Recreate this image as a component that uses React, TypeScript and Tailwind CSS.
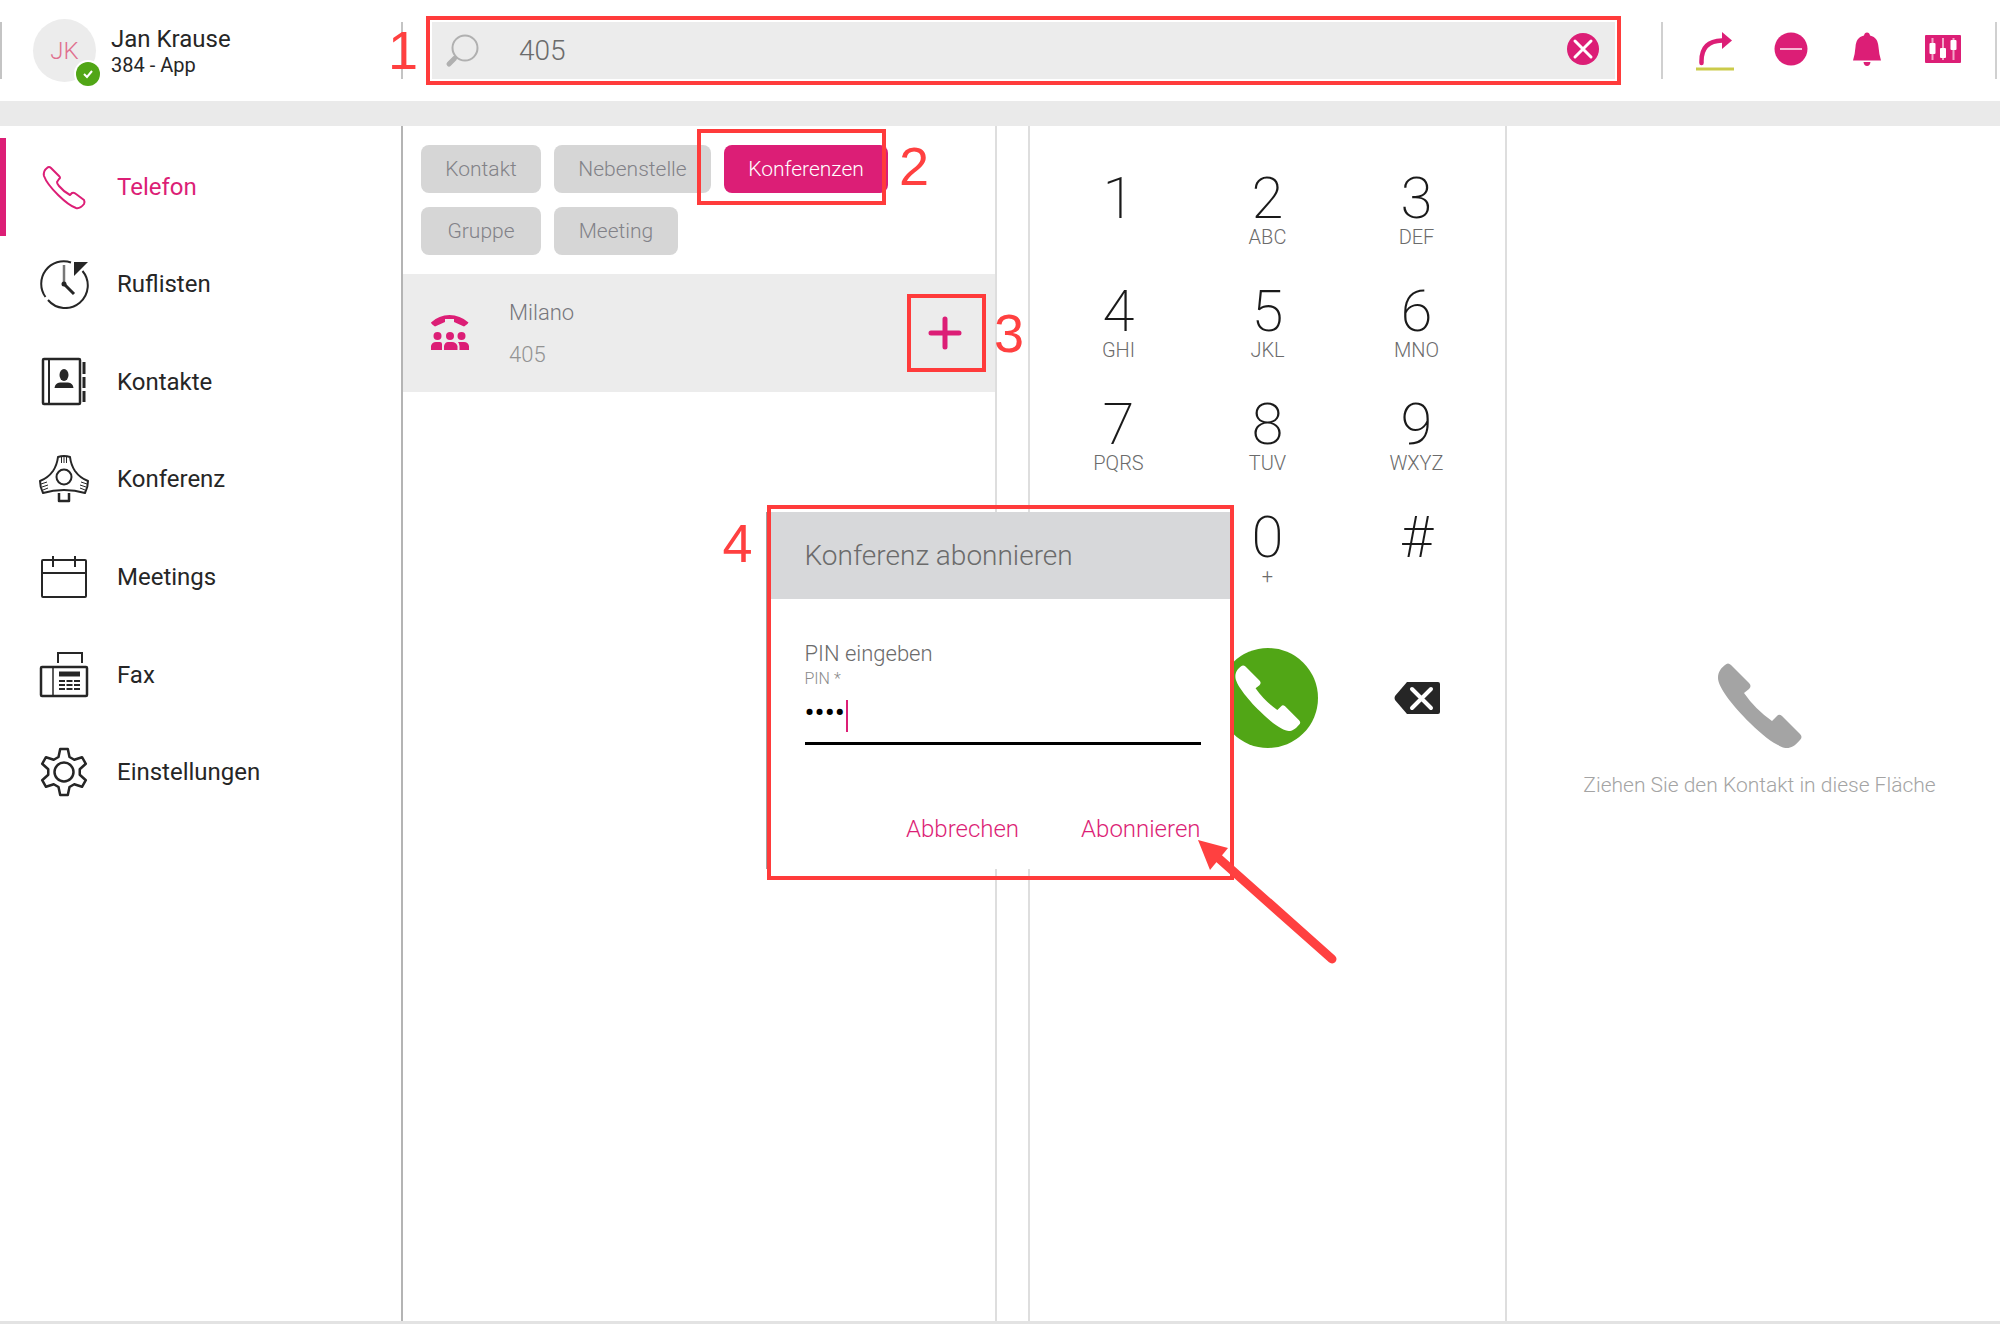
import React, { useState } from 'react'

type IconProps = { className?: string }

const HANDSET =
  'M7 2Q10-1 13 2L31 20Q34 23 31 26L26 30Q37 46 54 58L59 53Q61 50.500 64 53L82 71Q85 74 82 77C77 83 73 85 69 85C62 85 48 76 32 60C14 42 0 24 0 15C0 9 3 5 7 2Z'

function HandsetIcon({ className }: IconProps) {
  return (
    <svg viewBox="0 0 84 85" className={className} fill="currentColor" aria-hidden="true">
      <path d={HANDSET} />
    </svg>
  )
}

function PhoneOutlineIcon() {
  return (
    <svg viewBox="0 0 50 50" className="h-[50px] w-[50px]" fill="none" stroke="currentColor" strokeWidth="2" strokeLinejoin="round" aria-hidden="true">
      <path d="M8 6Q10 4 12 6L20 14Q22 16 20 17L18 20Q18 22 20 24Q25 30 31 33L33 31Q35 30 37 32L45 38Q46 40 45 42Q41 47 37 46C28 43 9 25 5 14Q4 9 8 6Z" />
    </svg>
  )
}

function HistoryIcon() {
  return (
    <svg viewBox="0 0 50 50" className="h-[50px] w-[50px]" fill="none" stroke="currentColor" strokeWidth="2" aria-hidden="true">
      <path d="M32 3.500A22.500 22.500 0 0 0 6.500 38" />
      <path d="M9 41A22.500 22.500 0 0 0 43.500 12" />
      <path d="M25 6V24" stroke="#777" strokeWidth="2.500" />
      <path d="M24 24L35 35" strokeWidth="3" />
      <circle cx="25" cy="25" r="1.500" fill="currentColor" />
      <path d="M35 3H49L35 17Z" fill="currentColor" stroke="none" />
    </svg>
  )
}

function ContactsIcon() {
  return (
    <svg viewBox="0 0 50 50" className="h-[50px] w-[50px]" fill="none" stroke="currentColor" strokeWidth="2" aria-hidden="true">
      <rect x="4" y="2" width="37" height="45" rx="1" strokeWidth="2.500" />
      <path d="M10 2V47" strokeWidth="2" />
      <path d="M45 5V17M45 20V31M45 34V45" strokeWidth="3" />
      <ellipse cx="25" cy="18" rx="4.500" ry="6" fill="currentColor" stroke="none" />
      <path d="M15.500 31Q16 26 21 25.500H29Q34 26 34.500 31Z" fill="currentColor" stroke="none" />
    </svg>
  )
}

function ConferenceIcon() {
  return (
    <svg viewBox="0 0 50 50" className="h-[50px] w-[50px]" fill="none" stroke="currentColor" strokeWidth="2" strokeLinejoin="round" aria-hidden="true">
      <path d="M19 3Q25 1 31 3Q32 11 36 17Q41 24 49 27Q49 33 46 39Q36 36 25 36Q14 36 4 39Q1 33 1 27Q9 24 14 17Q18 11 19 3Z" />
      <circle cx="25" cy="23" r="7.500" strokeWidth="2" />
      <path d="M20 39V47H30V39" strokeWidth="2.500" />
      <path d="M22.500 3V9M25 3V9M27.500 3V9M2 30L8 28M3 33L9 31M4 36L9 34M48 30L42 28M47 33L41 31M46 36L41 34" strokeWidth="1" />
    </svg>
  )
}

function CalendarIcon() {
  return (
    <svg viewBox="0 0 50 50" className="h-[50px] w-[50px]" fill="none" stroke="currentColor" strokeWidth="2" aria-hidden="true">
      <rect x="3" y="8" width="44" height="37" rx="1" />
      <path d="M3 21H47M14 4V15M36 4V15" />
    </svg>
  )
}

function FaxIcon() {
  return (
    <svg viewBox="0 0 50 50" className="h-[50px] w-[50px]" fill="none" stroke="currentColor" strokeWidth="2" aria-hidden="true">
      <rect x="2" y="17" width="46" height="29" rx="1" strokeWidth="2.500" />
      <path d="M14 17V46" strokeWidth="1.500" />
      <path d="M19 13V3H43V13" />
      <path d="M20 24H41" strokeWidth="5" />
      <path d="M20 31H41M20 35H41M20 39H41" strokeDasharray="6 1.500" />
    </svg>
  )
}

function gearPoints() {
  const tooth = [
    [-5.5, -15],
    [-3.8, -23],
    [3.8, -23],
    [5.5, -15],
  ]
  const points: string[] = []
  for (let i = 0; i < 6; i++) {
    const a = (i * Math.PI) / 3
    tooth.forEach(([x, y]) => {
      points.push(`${25 + x * Math.cos(a) - y * Math.sin(a)},${25 + x * Math.sin(a) + y * Math.cos(a)}`)
    })
  }
  return points.join(' ')
}

function GearIcon() {
  return (
    <svg viewBox="0 0 50 50" className="h-[50px] w-[50px]" fill="none" stroke="currentColor" strokeWidth="2" strokeLinejoin="round" aria-hidden="true">
      <polygon points={gearPoints()} strokeWidth="2.500" />
      <circle cx="25" cy="25" r="9.500" strokeWidth="2.500" />
    </svg>
  )
}

const navItems = [
  { label: 'Telefon', icon: <PhoneOutlineIcon />, active: true },
  { label: 'Ruflisten', icon: <HistoryIcon /> },
  { label: 'Kontakte', icon: <ContactsIcon /> },
  { label: 'Konferenz', icon: <ConferenceIcon /> },
  { label: 'Meetings', icon: <CalendarIcon /> },
  { label: 'Fax', icon: <FaxIcon /> },
  { label: 'Einstellungen', icon: <GearIcon /> },
]

const keys = [
  ['1', ''],
  ['2', 'ABC'],
  ['3', 'DEF'],
  ['4', 'GHI'],
  ['5', 'JKL'],
  ['6', 'MNO'],
  ['7', 'PQRS'],
  ['8', 'TUV'],
  ['9', 'WXYZ'],
]

function Key({ digit, letters, className = '' }: { digit: string; letters: string; className?: string }) {
  return (
    <button className={`flex h-[113px] flex-col items-center ${className}`}>
      <span className="text-[58px] leading-[56px] font-extralight text-[#1a1a1a]">{digit}</span>
      {letters && <span className="text-xl leading-[22px] font-light text-[#6b6b6b]">{letters}</span>}
    </button>
  )
}

// Red frame and step number laid over the element it explains
function Callout({ frame, step, stepClass }: { frame: string; step: string; stepClass: string }) {
  return (
    <>
      <div className={`pointer-events-none absolute z-20 border-4 border-[#ff3b3b] ${frame}`} />
      <span className={`pointer-events-none absolute z-20 font-['Liberation_Sans',sans-serif] text-[54px] leading-none text-[#ff4040] ${stepClass}`}>
        {step}
      </span>
    </>
  )
}

function Header() {
  const [query, setQuery] = useState('405')

  return (
    <header className="flex h-[126px] items-start border-b-[25px] border-[#eaeaea] pt-[22px]">
      <div className="flex h-[57px] w-[403px] shrink-0 items-center border-x-2 border-[#c4c4c4] pl-[31px]">
        <div className="relative flex h-[63px] w-[63px] items-center justify-center rounded-full bg-[#ececec] text-2xl font-light text-[#e0708f]">
          JK
          <span className="absolute -right-1 -bottom-1 flex h-6 w-6 items-center justify-center rounded-full bg-[#51a616] ring-2 ring-white">
            <svg viewBox="0 0 12 12" className="h-3 w-3" fill="none" stroke="#fff" strokeWidth="2" aria-hidden="true">
              <path d="M2 6L5 9L10 3" />
            </svg>
          </span>
        </div>
        <div className="pl-[15px] text-[#262626]">
          <div className="text-2xl leading-7">Jan Krause</div>
          <div className="text-xl leading-6">384 - App</div>
        </div>
      </div>

      <div className="relative ml-[29px] flex h-[57px] flex-1 items-center bg-[#ececec] pr-4 pl-3">
        <svg viewBox="0 0 36 36" className="h-9 w-9 text-[#b0b0b0]" fill="none" stroke="currentColor" aria-hidden="true">
          <circle cx="21" cy="15" r="12.500" strokeWidth="2" />
          <path d="M10.500 25.500L5 31" strokeWidth="5" strokeLinecap="round" />
        </svg>
        <input
          aria-label="Suche"
          value={query}
          onChange={(e) => setQuery(e.target.value)}
          className="min-w-0 flex-1 bg-transparent pl-[39px] text-[28px] font-light text-[#6b6b6b] outline-none"
        />
        <button aria-label="Suche leeren" onClick={() => setQuery('')}>
          <svg viewBox="0 0 32 32" className="mb-1 h-8 w-8" aria-hidden="true">
            <circle cx="16" cy="16" r="16" fill="#dc1e76" />
            <path d="M8 8L24 24M24 8L8 24" stroke="#fff" strokeWidth="3" strokeLinecap="round" />
          </svg>
        </button>
        <Callout frame="-inset-x-1.5 -top-1.5 -bottom-1.5" step="1" stepClass="right-full bottom-0.5 mr-3.5" />
      </div>

      <div className="mr-[3px] ml-[46px] flex h-[57px] items-center gap-9 border-x-2 border-[#d0d0d0] px-8 text-[#dc1e76]">
        <button aria-label="Weiterleiten">
          <svg viewBox="0 0 40 42" className="h-[42px] w-10" aria-hidden="true">
            <path d="M6.500 33V31Q6.500 11 27 10.500" fill="none" stroke="currentColor" strokeWidth="4.500" strokeLinecap="round" />
            <path d="M27 2L37 10.500L27 19Z" fill="currentColor" />
            <path d="M1 39H39" stroke="#cbcb4a" strokeWidth="3" />
          </svg>
        </button>
        <button aria-label="Nicht stören">
          <svg viewBox="0 0 40 40" className="h-10 w-10" aria-hidden="true">
            <circle cx="20" cy="18" r="16.500" fill="currentColor" />
            <path d="M9 18H31" stroke="#f6b8d3" strokeWidth="2" />
          </svg>
        </button>
        <button aria-label="Benachrichtigungen">
          <svg viewBox="0 0 40 40" className="h-10 w-10" fill="currentColor" aria-hidden="true">
            <path d="M20 1.500Q22.500 1.500 23 4.500C29 6 31 10 31.500 16Q32 23 34 29.500H6Q8 23 8.500 16C9 10 11 6 17 4.500Q17.500 1.500 20 1.500Z" />
            <path d="M16.500 31H23.500Q23 35 20 35Q17 35 16.500 31Z" />
          </svg>
        </button>
        <button aria-label="Audio">
          <svg viewBox="0 0 40 40" className="h-10 w-10" aria-hidden="true">
            <rect x="2" y="4" width="36" height="28" rx="1" fill="currentColor" />
            <path d="M9.500 7V29M20 7V29M30.500 7V29" stroke="#f3a5c8" strokeWidth="2" />
            <g fill="#fff">
              <rect x="6.500" y="12" width="6" height="11" rx="1" />
              <rect x="17" y="17" width="6" height="10" rx="1" />
              <rect x="27.500" y="9" width="6" height="10" rx="1" />
            </g>
          </svg>
        </button>
      </div>
    </header>
  )
}

function Sidebar() {
  return (
    <nav className="w-[403px] shrink-0 border-r-2 border-[#b4b4b4] pt-3">
      <div className="grid h-[683px] grid-rows-7">
        {navItems.map((item) => (
          <a
            key={item.label}
            href="#"
            className={`flex items-center gap-7 border-l-[6px] pl-[33px] text-2xl ${
              item.active ? 'border-[#dc1e76] text-[#dc1e76]' : 'border-transparent text-[#262626]'
            }`}
          >
            {item.icon}
            {item.label}
          </a>
        ))}
      </div>
    </nav>
  )
}

const chipBase = 'h-12 rounded-lg pt-0.5 text-[21px] font-light'

function ResultList() {
  return (
    <section className="w-[594px] shrink-0 border-r-2 border-[#dedede]">
      <div className="flex flex-wrap gap-x-[13px] gap-y-[14px] py-[19px] pl-[18px]">
        <button className={`${chipBase} w-[120px] bg-[#d6d6d6] text-[#828288]`}>Kontakt</button>
        <button className={`${chipBase} w-[157px] bg-[#d6d6d6] text-[#828288]`}>Nebenstelle</button>
        <div className="relative">
          <button className={`${chipBase} w-[164px] bg-[#dc1e76] text-white`}>Konferenzen</button>
          <Callout frame="-top-4 right-0.5 -bottom-3 -left-[27px]" step="2" stepClass="left-full -top-1.5 ml-[11px]" />
        </div>
        <button className={`${chipBase} w-[120px] bg-[#d6d6d6] text-[#828288]`}>Gruppe</button>
        <button className={`${chipBase} w-[124px] bg-[#d6d6d6] text-[#828288]`}>Meeting</button>
      </div>

      <div className="flex h-[118px] items-center bg-[#ececec] pr-[30px] pl-[27px]">
        <svg viewBox="0 0 40 36" className="h-9 w-10 text-[#dc1e76]" fill="currentColor" aria-hidden="true">
          <path d="M1 7.500Q9 0 19.500 0Q30 0 38.500 7.500Q38 9 34 11.500L24 7V4H15V7L5 11.500Q1 9 1 7.500Z" />
          <circle cx="7.500" cy="21" r="4" />
          <circle cx="20" cy="21" r="4" />
          <circle cx="31.500" cy="21" r="4" />
          <path d="M1 35V31Q2 27 6 27H10Q12 27 12 29V35ZM14 35V31Q15 27 18 27H22Q26 27 27.500 31V35ZM29.500 35V31Q29 28 28 27H34Q38 27 39 31V35Z" />
        </svg>
        <div className="flex-1 pt-0.5 pl-[39px] text-[22px] font-light">
          <div className="leading-[42px] text-[#77777c]">Milano</div>
          <div className="leading-[42px] text-[#939393]">405</div>
        </div>
        <div className="relative h-10 w-10">
          <button aria-label="Milano abonnieren" className="flex h-10 w-10 items-center justify-center">
            <svg viewBox="0 0 34 34" className="h-[34px] w-[34px]" stroke="#dc1e76" strokeWidth="5" strokeLinecap="round" aria-hidden="true">
              <path d="M17 3V31M3 17H31" />
            </svg>
          </button>
          <Callout frame="-inset-y-[19px] -left-[18px] -right-[21px]" step="3" stepClass="left-full top-[-7px] ml-[29px]" />
        </div>
      </div>
    </section>
  )
}

function Dialpad() {
  return (
    <section className="ml-[31px] w-[479px] shrink-0 border-x-2 border-[#dedede] pt-11">
      <div className="mx-auto grid w-[447px] grid-cols-3">
        {keys.map(([digit, letters]) => (
          <Key key={digit} digit={digit} letters={letters} />
        ))}
        <Key digit="0" letters="+" className="col-start-2" />
        <Key digit="#" letters="" />
        <button
          aria-label="Anrufen"
          className="col-start-2 mt-[26px] flex h-[100px] w-[100px] items-center justify-center justify-self-center rounded-full bg-[#51a616] text-white"
        >
          <HandsetIcon className="h-[66px] w-[66px]" />
        </button>
        <button aria-label="Löschen" className="mt-[26px] flex items-center justify-center">
          <svg viewBox="0 0 46 32" className="h-8 w-[46px]" aria-hidden="true">
            <path d="M13 0H44Q46 0 46 2V30Q46 32 44 32H13L1 18Q0 16 1 14Z" fill="#262626" />
            <path d="M18 7L37 26M37 7L18 26" stroke="#fff" strokeWidth="4" strokeLinecap="round" />
          </svg>
        </button>
      </div>
    </section>
  )
}

function SubscribeDialog() {
  const [pin, setPin] = useState('1234')

  return (
    <div className="pointer-events-none absolute inset-0 flex items-start justify-center pt-[512px] pr-1">
      <div
        role="dialog"
        aria-labelledby="dialog-title"
        className="pointer-events-auto relative h-[357px] w-[465px] border-l border-[#a0a0a0] bg-white font-light"
      >
        <h2 id="dialog-title" className="bg-[#d7d8da] pl-[38px] text-[28px] leading-[87px] font-light text-[#6b6b6b]">
          Konferenz abonnieren
        </h2>
        <form className="pt-10 pr-[30px] pl-[38px]" onSubmit={(e) => e.preventDefault()}>
          <p className="text-[22px] leading-[30px] text-[#6b6b6b]">PIN eingeben</p>
          <label htmlFor="pin" className="block text-base leading-5 text-[#8a8a8a]">
            PIN *
          </label>
          <div className="relative border-b-[3px] border-black">
            <input
              id="pin"
              type="password"
              value={pin}
              onChange={(e) => setPin(e.target.value)}
              className="block h-[53px] w-full bg-transparent pb-1.5 text-[30px] font-normal text-black outline-none"
            />
            <span className="absolute top-[11px] left-[41px] h-8 w-0.5 bg-[#dc1e76]" />
          </div>
          <div className="mt-[69px] flex justify-end gap-[62px] text-2xl leading-[30px] text-[#dc1e76]">
            <button type="button">Abbrechen</button>
            <button type="submit">Abonnieren</button>
          </div>
        </form>
        <Callout frame="-top-[7px] -bottom-[11px] right-[-3px] left-0" step="4" stepClass="right-full top-[4px] mr-3.5" />
        <svg viewBox="0 0 144 130" className="pointer-events-none absolute top-[325px] left-[430px] z-20 h-[130px] w-[144px]" aria-hidden="true">
          <path d="M18 18L135 122" stroke="#ff4040" strokeWidth="9" strokeLinecap="round" />
          <path d="M1 3L31 11L13 33Z" fill="#ff4040" />
        </svg>
      </div>
    </div>
  )
}

export default function App() {
  return (
    <div className="relative flex min-h-screen flex-col bg-white font-[Roboto,sans-serif]">
      <Header />
      <main className="flex flex-1 border-b-[3px] border-[#e3e3e3]">
        <Sidebar />
        <ResultList />
        <Dialpad />
        <section className="flex flex-1 flex-col items-center justify-center pt-3.5 pl-3 text-[#a4a4a4]">
          <HandsetIcon className="h-[85px] w-[84px]" />
          <p className="mt-[23px] text-[21px] leading-7 font-light">Ziehen Sie den Kontakt in diese Fläche</p>
        </section>
      </main>
      <SubscribeDialog />
    </div>
  )
}
